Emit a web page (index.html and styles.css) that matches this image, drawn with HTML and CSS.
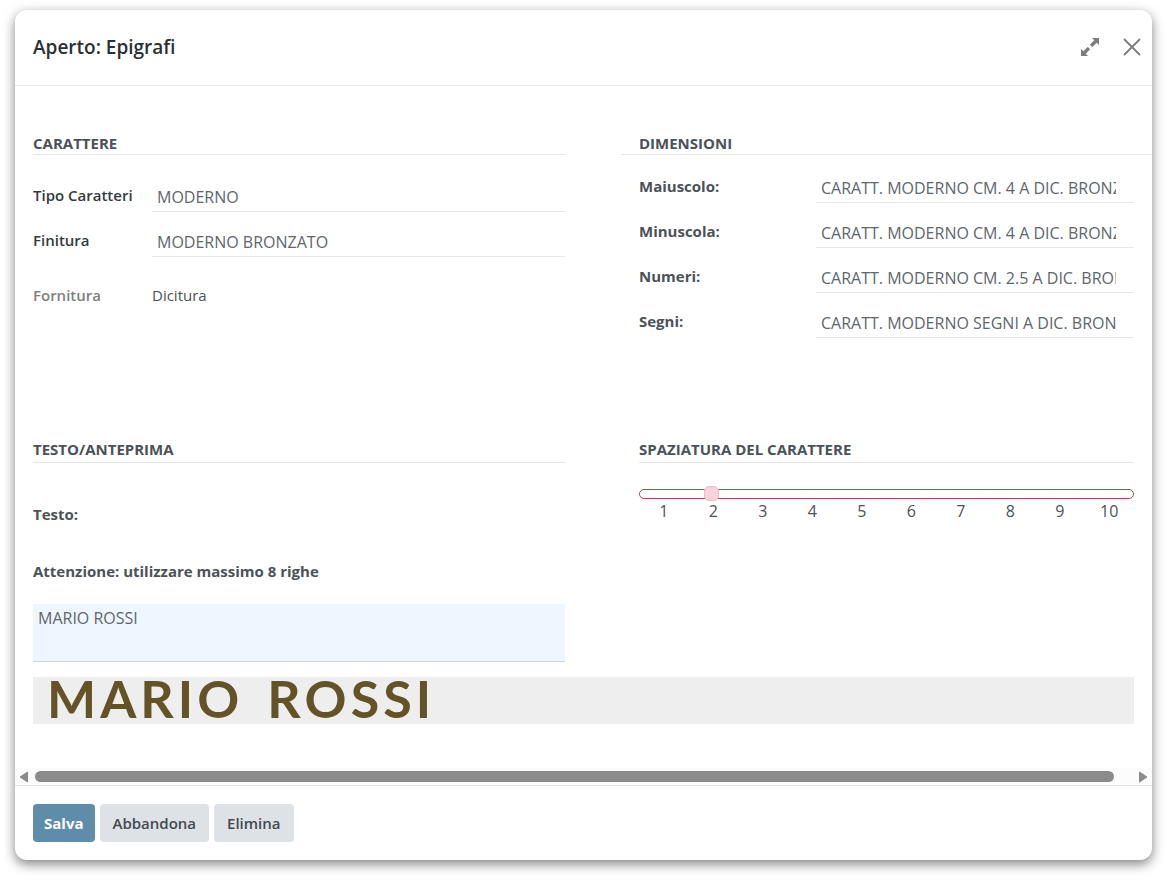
FILE: index.html
```html
<!DOCTYPE html>
<html lang="it">
<head>
<meta charset="utf-8">
<title>Aperto: Epigrafi</title>
<link rel="stylesheet" href="styles.css">
</head>
<body>
<main class="dialog" role="dialog" aria-labelledby="title">
  <header class="dialog-header">
    <h1 class="dialog-title" id="title">Aperto: Epigrafi</h1>
    <div class="window-tools">
      <button class="icon-button" type="button" aria-label="Espandi">
        <svg width="20" height="20" viewBox="0 0 20 20"><path fill="#7c7c7c" d="M12 1h7v7l-2.300-2.300-4.400 4.400-2.400-2.400 4.400-4.400zM1 12l2.300 2.300 4.400-4.400 2.400 2.400-4.400 4.400L8 19H1z"/></svg>
      </button>
      <button class="icon-button" type="button" aria-label="Chiudi">
        <svg width="18" height="18" viewBox="0 0 18 18"><path fill="none" stroke="#7c7c7c" stroke-width="1.800" stroke-linecap="round" d="M1.500 1.500l15 15M16.500 1.500l-15 15"/></svg>
      </button>
    </div>
  </header>

  <div class="dialog-body">
    <div class="columns settings">
      <section>
        <h2 class="section-title">Carattere</h2>
        <div class="fields character-fields">
          <label class="label dark" for="tipo">Tipo Caratteri</label>
          <input class="input" id="tipo" value="MODERNO">
          <label class="label dark" for="finitura">Finitura</label>
          <input class="input" id="finitura" value="MODERNO BRONZATO">
          <span class="label muted supply">Fornitura</span>
          <span class="value supply">Dicitura</span>
        </div>
      </section>
      <section>
        <h2 class="section-title wide">Dimensioni</h2>
        <div class="fields size-fields">
          <label class="label strong" for="maiuscolo">Maiuscolo:</label>
          <input class="input clipped" id="maiuscolo" value="CARATT. MODERNO CM. 4 A DIC. BRONZATO">
          <label class="label strong" for="minuscola">Minuscola:</label>
          <input class="input clipped" id="minuscola" value="CARATT. MODERNO CM. 4 A DIC. BRONZATO">
          <label class="label strong" for="numeri">Numeri:</label>
          <input class="input clipped" id="numeri" value="CARATT. MODERNO CM. 2.5 A DIC. BRONZATO">
          <label class="label strong" for="segni">Segni:</label>
          <input class="input clipped" id="segni" value="CARATT. MODERNO SEGNI A DIC. BRONZATO">
        </div>
      </section>
    </div>

    <div class="columns text-settings">
      <section>
        <h2 class="section-title spaced">Testo/Anteprima</h2>
        <label class="label strong text-label" for="testo">Testo:</label>
        <p class="label strong notice">Attenzione: utilizzare massimo 8 righe</p>
        <textarea class="textarea" id="testo">MARIO ROSSI</textarea>
      </section>
      <section>
        <h2 class="section-title spaced" id="spacing">Spaziatura del carattere</h2>
        <input class="slider" type="range" min="1" max="10" step="0.1" value="2.2" aria-labelledby="spacing">
        <div class="ticks"><span>1</span><span>2</span><span>3</span><span>4</span><span>5</span><span>6</span><span>7</span><span>8</span><span>9</span><span>10</span></div>
      </section>
    </div>

    <div class="preview">
      <span class="word"><span>M</span><span>A</span><span>R</span><span>I</span><span>O</span></span>
      <span class="word"><span>R</span><span>O</span><span>S</span><span>S</span><span>I</span></span>
    </div>
  </div>

  <div class="scrollbar" aria-hidden="true">
    <svg width="10" height="12" viewBox="0 0 10 12"><path fill="#8b8b8b" stroke="#8b8b8b" stroke-linejoin="round" d="M8.500 1v10L1 6z"/></svg>
    <div class="scroll-track"><div class="scroll-thumb"></div></div>
    <svg width="10" height="12" viewBox="0 0 10 12"><path fill="#8b8b8b" stroke="#8b8b8b" stroke-linejoin="round" d="M1.500 1v10L9 6z"/></svg>
  </div>

  <footer class="dialog-footer">
    <button class="button primary" type="button">Salva</button>
    <button class="button" type="button">Abbandona</button>
    <button class="button" type="button">Elimina</button>
  </footer>
</main>
</body>
</html>
```
FILE: styles.css
```css
* {
  box-sizing: border-box;
}

body {
  margin: 0;
  padding: 10px 15px 20px;
  background: #fff;
  color: #4c5258;
  font: 15px/20px "Open Sans", "Noto Sans", sans-serif;
}

button, input, textarea {
  font: inherit;
  color: inherit;
}

h1, h2, p {
  margin: 0;
}

.dialog {
  display: flex;
  flex-direction: column;
  border-radius: 12px;
  background: #fff;
  box-shadow: 0 4px 12px rgba(0, 0, 0, .5);
}

.dialog-header {
  display: flex;
  align-items: center;
  justify-content: space-between;
  min-height: 76px;
  padding: 0 11px 2px 18px;
  border-bottom: 1px solid #e5e5e5;
}

.dialog-title {
  color: #2b3035;
  font-size: 19px;
  font-weight: 600;
  line-height: 24px;
}

.window-tools {
  display: flex;
  align-items: center;
  gap: 23px;
}

.icon-button {
  display: flex;
  padding: 0;
  border: 0;
  background: none;
}

.dialog-body {
  padding: 48px 18px 44px;
}

.columns {
  display: grid;
  grid-template-columns: 532fr 495fr;
  column-gap: 74px;
}

.settings {
  min-height: 306px;
}

.section-title {
  padding-bottom: 2px;
  border-bottom: 1px solid #e5e5e5;
  font-size: 15px;
  font-weight: 700;
  line-height: 18px;
  text-transform: uppercase;
}

.wide {
  margin: 0 -18px;
  padding-right: 18px;
  padding-left: 18px;
}

.spaced {
  padding-bottom: 4px;
}

.fields {
  display: grid;
  grid-auto-rows: 30px;
  row-gap: 15px;
}

.character-fields {
  grid-template-columns: 119px minmax(0, 1fr);
  margin-top: 27px;
}

.size-fields {
  grid-template-columns: 177px minmax(0, 1fr);
  margin-top: 18px;
}

.label {
  font-weight: 600;
  line-height: 26px;
}

.strong {
  font-weight: 700;
}

.dark {
  color: #343a40;
}

.muted {
  color: #808080;
}

.value {
  line-height: 26px;
}

.supply {
  padding-top: 10px;
}

.input {
  width: 100%;
  min-width: 0;
  padding: 0 5px;
  border: 0;
  border-bottom: 1px solid #e5e7e9;
  background: none;
  color: #60666c;
  font-size: 16px;
}

.clipped {
  padding-right: 18px;
}

.text-label {
  display: block;
  margin-top: 38px;
}

.notice {
  margin-top: 31px;
}

.textarea {
  display: block;
  width: 100%;
  height: 58px;
  margin-top: 20px;
  padding: 4px 5px;
  border: 0;
  border-bottom: 1px solid #ccd3da;
  background: #eef6ff;
  color: #60666c;
  font-size: 16px;
  resize: none;
}

.slider {
  display: block;
  width: 100%;
  height: 16px;
  margin: 23px 0 0;
  background: none;
  appearance: none;
}

.slider::-webkit-slider-runnable-track {
  height: 10px;
  border: 1px solid #bd4349;
  border-radius: 5px;
  background: #fff;
}

.slider::-webkit-slider-thumb {
  width: 15px;
  height: 15px;
  margin-top: -4px;
  border: 1px solid #f0bccb;
  border-radius: 5px;
  background: #fad1dd;
  appearance: none;
}

.ticks {
  display: grid;
  grid-template-columns: repeat(10, 1fr);
  font-size: 16px;
  line-height: 18px;
  text-align: center;
}

.preview {
  display: flex;
  gap: 28px;
  margin-top: 15px;
  padding: 0 14px 5px;
  background: #eee;
  color: #635326;
  font-family: Lato, sans-serif;
  font-size: 52px;
  font-weight: 700;
  line-height: 42px;
}

.word {
  display: flex;
  gap: 4px;
}

.scrollbar {
  display: flex;
  align-items: center;
  gap: 6px;
  height: 17px;
  padding: 0 4px;
  background: #fcfcfc;
}

.scroll-track {
  flex: 1;
  padding-right: 18px;
}

.scroll-thumb {
  height: 11px;
  border-radius: 6px;
  background: #8b8b8b;
}

.dialog-footer {
  display: flex;
  gap: 5px;
  padding: 18px;
  border-top: 1px solid #e0e0e8;
}

.button {
  height: 38px;
  padding: 0 13px;
  border: 0;
  border-radius: 4px;
  background: #dee2e6;
  color: #43494e;
  font-weight: 600;
}

.primary {
  padding: 0 11px;
  background: #5e8da9;
  color: #fff;
  font-weight: 700;
}
```
